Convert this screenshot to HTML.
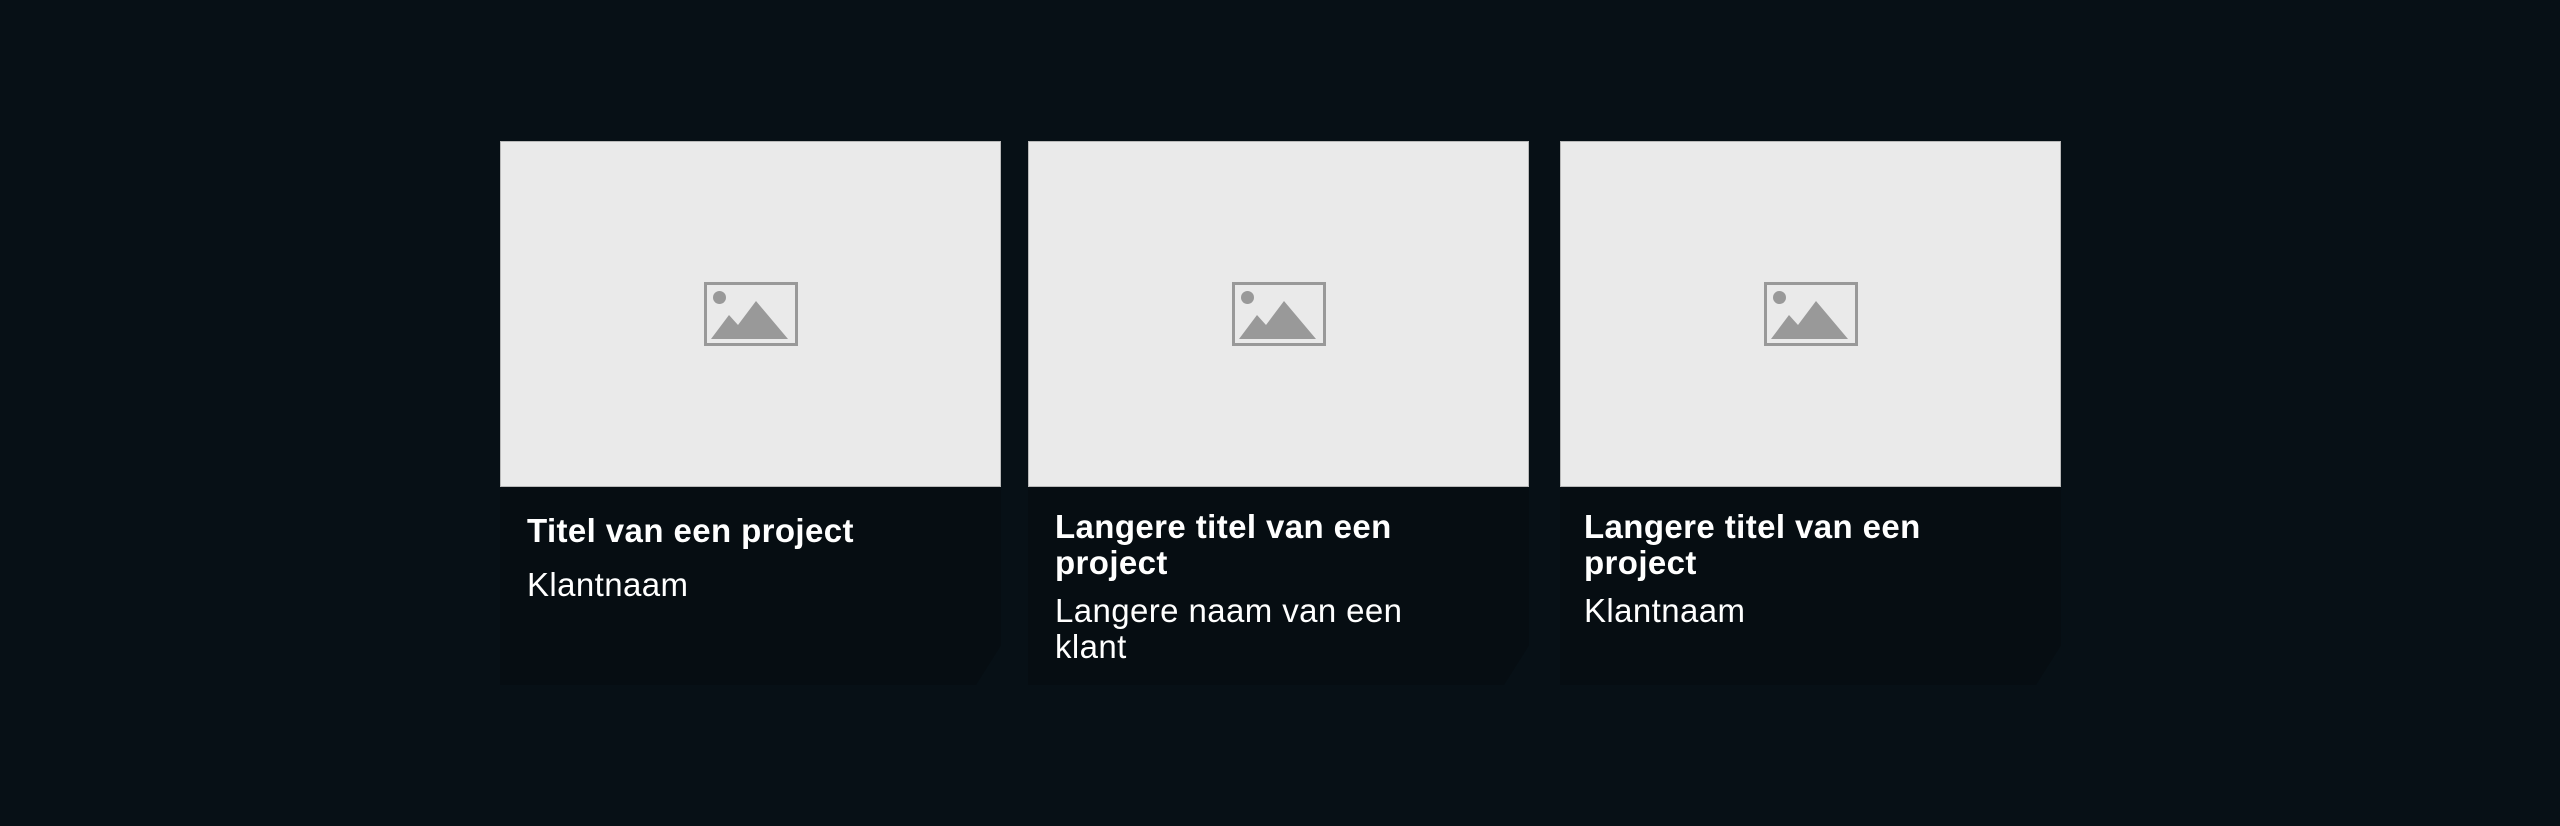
<!DOCTYPE html>
<html><head><meta charset="utf-8"><style>
html,body{margin:0;padding:0;}
body{width:2560px;height:826px;background:#071016;position:relative;overflow:hidden;font-family:"Liberation Sans",sans-serif;}
.card{position:absolute;top:141px;width:501px;height:544px;}
.img{position:absolute;left:0;top:0;width:499px;height:344px;background:#eaeaea;border:1px solid #b9b9b9;}
.img svg{position:absolute;left:50%;top:50%;transform:translate(-50%,-50%);}
.body{position:absolute;left:0;top:346px;width:501px;height:198px;background:#060d12;clip-path:polygon(0 0,100% 0,100% 80%,95% 100%,0 100%);}
.t{position:absolute;left:27px;width:360px;color:#fff;font-size:33px;line-height:36px;letter-spacing:0.4px;}
.title{font-weight:bold;}
</style></head><body>

<div class="card" style="left:500px">
  <div class="img"><svg width="94" height="64" viewBox="0 0 94 64"><rect x="1.5" y="1.5" width="91" height="61" fill="none" stroke="#999" stroke-width="3"/><ellipse cx="15.5" cy="15.5" rx="6.5" ry="6.5" fill="#999"/><path d="M7 57 L25 33 L34 43 L52 19 L84 57 Z" fill="#999"/></svg></div>
  <div class="body">
    <div class="t title" style="top:26px;width:420px">Titel van een project</div>
    <div class="t" style="top:80px">Klantnaam</div>
  </div>
</div>

<div class="card" style="left:1028px">
  <div class="img"><svg width="94" height="64" viewBox="0 0 94 64"><rect x="1.5" y="1.5" width="91" height="61" fill="none" stroke="#999" stroke-width="3"/><ellipse cx="15.5" cy="15.5" rx="6.5" ry="6.5" fill="#999"/><path d="M7 57 L25 33 L34 43 L52 19 L84 57 Z" fill="#999"/></svg></div>
  <div class="body">
    <div class="t title" style="top:22px">Langere titel van een project</div>
    <div class="t" style="top:106px">Langere naam van een klant</div>
  </div>
</div>

<div class="card" style="left:1560px">
  <div class="img"><svg width="94" height="64" viewBox="0 0 94 64"><rect x="1.5" y="1.5" width="91" height="61" fill="none" stroke="#999" stroke-width="3"/><ellipse cx="15.5" cy="15.5" rx="6.5" ry="6.5" fill="#999"/><path d="M7 57 L25 33 L34 43 L52 19 L84 57 Z" fill="#999"/></svg></div>
  <div class="body">
    <div class="t title" style="top:22px;left:24px">Langere titel van een project</div>
    <div class="t" style="top:106px;left:24px">Klantnaam</div>
  </div>
</div>

</body></html>
